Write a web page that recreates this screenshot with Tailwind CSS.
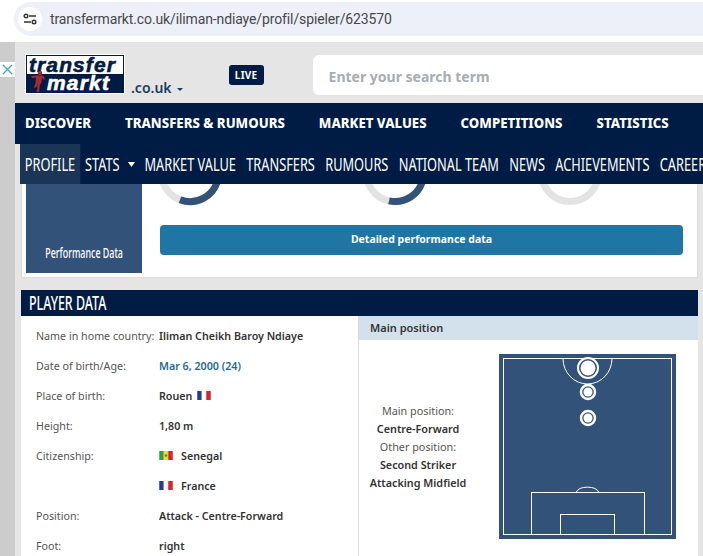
<!DOCTYPE html>
<html lang="en">
<head>
    <meta charset="UTF-8">
    <title>Iliman Ndiaye - Player profile | Transfermarkt</title>
    <script src="https://cdn.jsdelivr.net/npm/@tailwindcss/browser@4"></script>
</head>
<body class="h-[556px] overflow-hidden flex flex-col bg-white font-['Noto_Sans',sans-serif] text-[#333]">
    <!-- browser bar -->
    <div class="h-[42px] shrink-0 bg-white pt-[2px] pl-[14px]">
        <div class="h-[34px] bg-[#edf0f9] rounded-l-full flex items-center pl-[4px] gap-[8px]">
            <div class="w-[24px] h-[24px] rounded-full bg-white flex items-center justify-center">
                <svg width="14" height="12" viewBox="0 0 14 12" fill="none" stroke="#333" stroke-width="1.4">
                    <path d="M6 3h7M1 9h7"/><circle cx="3" cy="3" r="1.8"/><circle cx="11" cy="9" r="1.8"/>
                </svg>
            </div>
            <span class="text-[14px] text-[#474747] font-['Roboto',sans-serif] tracking-[-0.12px]">transfermarkt.co.uk/iliman-ndiaye/profil/spieler/623570</span>
        </div>
    </div>

    <div class="flex-1 flex min-h-0">
        <!-- ad strip -->
        <div class="w-[15px] shrink-0 bg-[#cccccc] pt-[20px]">
            <div class="h-[15px] bg-white flex items-center justify-center">
                <svg width="11" height="11" viewBox="0 0 11 11" stroke="#3ba7d8" stroke-width="1.3"><path d="M1 1l9 9M10 1l-9 9"/></svg>
            </div>
        </div>

        <div class="flex-1 min-w-0 bg-[#e5e5e5] flex flex-col">
            <!-- logo + search -->
            <div class="h-[61px] shrink-0 flex pt-[13px]">
                <div class="ml-[11px] w-[98px] h-[38px] bg-white border border-[#001b44] outline outline-white flex flex-col italic font-black font-['Liberation_Sans',sans-serif] relative">
                    <div class="h-[18px] bg-white text-[#001b44] text-[21px] leading-[18px] pl-[2px] tracking-[1.1px] [-webkit-text-stroke:0.6px_#001b44]">transfer</div>
                    <div class="h-[18px] bg-[#001b44] text-white text-[21px] leading-[18px] pl-[20px] tracking-[1.2px] [-webkit-text-stroke:0.6px_#ffffff]">markt</div>
                    <svg class="absolute left-[3px] top-[14px]" width="16" height="23" viewBox="0 0 16 22" fill="#a62a2f">
                        <circle cx="10" cy="2.500" r="2.200"/>
                        <path d="M1 5.500l6-.5h6l2 3-1 1-2-1.500-.5 4-1.500 3-1 6-2 0 .5-7-1 3-2 1-.5-1 1.500-4 .5-5.500-4 .5z"/>
                        <circle cx="8" cy="20" r="1.500"/>
                    </svg>
                </div>
                <div class="ml-[7px] mt-[23px] text-[14px] leading-[19px] font-semibold text-[#1d3a5f] flex items-center h-[19px]">.co.uk<span class="ml-[5px] mt-[3px] w-0 h-0 border-x-[3px] border-x-transparent border-t-[3px] border-t-[#1d3a5f]"></span></div>
                <div class="ml-[46px] mt-[10px] w-[35px] h-[20px] rounded-[3px] bg-[#001b44] text-white text-[10px] font-bold flex items-center justify-center tracking-[0.2px]">LIVE</div>
                <div class="ml-[49px] flex-1 h-[40px] bg-white rounded-l-[6px] flex items-center pl-[16px] pt-[2px] text-[14px] font-bold text-[#a8acb3]">Enter your search term</div>
            </div>

            <!-- main nav -->
            <div class="h-[41px] shrink-0 bg-[#001b44] flex items-center pl-[10px] gap-[34px] text-white text-[13.2px] font-extrabold whitespace-nowrap overflow-hidden">
                <span>DISCOVER</span>
                <span>TRANSFERS &amp; RUMOURS</span>
                <span>MARKET VALUES</span>
                <span>COMPETITIONS</span>
                <span>STATISTICS</span>
            </div>

            <!-- sub nav -->
            <div class="h-[40px] shrink-0 ml-[5px] bg-[#001b44] overflow-hidden">
                <div class="w-[1000px] h-full origin-left scale-x-[0.71] flex items-stretch text-white text-[18px] whitespace-nowrap">
                    <div class="w-[84.500px] bg-[#1a3556] flex items-center justify-center">PROFILE</div>
                    <div class="ml-[7px] flex items-center">STATS<span class="ml-[12px] w-0 h-0 border-x-[5.500px] border-x-transparent border-t-[5px] border-t-white"></span></div>
                    <div class="ml-[13px] flex items-center gap-[14.500px]">
                        <span>MARKET VALUE</span>
                        <span>TRANSFERS</span>
                        <span>RUMOURS</span>
                        <span>NATIONAL TEAM</span>
                        <span>NEWS</span>
                        <span>ACHIEVEMENTS</span>
                        <span>CAREER</span>
                    </div>
                </div>
            </div>

            <!-- performance card -->
            <div class="h-[94px] shrink-0 ml-[6px] mr-[5px] bg-white border-x border-b border-[#dcdcdc] flex pl-[4px]">
                <div class="w-[116px] h-[89px] bg-[#33527a] flex items-end justify-center pb-[10px] text-white">
                    <span class="scale-x-[0.635] text-[14px] font-medium whitespace-nowrap">Performance Data</span>
                </div>
                <div class="ml-[18px] w-[523px] flex flex-col">
                    <svg class="h-[41px] w-[523px]" viewBox="0 0 523 41" fill="none" stroke-width="7">
                        <circle cx="30" cy="-11" r="28.500" stroke="#e3e3e3"/>
                        <path d="M20 15.700A28.500 28.500 0 0 0 58 -5" stroke="#33527a"/>
                        <circle cx="235" cy="-11" r="28.500" stroke="#e3e3e3"/>
                        <path d="M229 16.860A28.500 28.500 0 0 0 263 -5" stroke="#33527a"/>
                        <circle cx="410" cy="-11" r="28.500" stroke="#e3e3e3"/>
                    </svg>
                    <div class="h-[30px] rounded-[4px] bg-[#1f76a5] text-white text-[10.5px] font-bold flex items-center justify-center">Detailed performance data</div>
                </div>
            </div>

            <!-- player data -->
            <div class="mt-[12px] flex-1 min-h-0 ml-[6px] mr-[5px] bg-white flex flex-col">
                <div class="h-[26px] shrink-0 bg-[#001b44] pl-[8px] flex items-center text-white">
                    <span class="origin-left scale-x-[0.655] text-[19px] font-medium whitespace-nowrap">PLAYER DATA</span>
                </div>
                <div class="flex-1 flex min-h-0">
                    <div class="w-[337px] shrink-0 pl-[15px] pt-[5px] text-[10.7px]">
                        <div class="grid grid-cols-[123px_1fr] auto-rows-[30px] items-center">
                            <span class="text-[#555]">Name in home country:</span><b class="font-semibold">Iliman Cheikh Baroy Ndiaye</b>
                            <span class="text-[#555]">Date of birth/Age:</span><b class="font-semibold text-[#1d6a96]">Mar 6, 2000 (24)</b>
                            <span class="text-[#555]">Place of birth:</span><b class="font-semibold flex items-center gap-[5px]">Rouen
                                <svg width="14" height="9" viewBox="0 0 3 2"><rect width="1" height="2" fill="#1f3c96"/><rect x="1" width="1" height="2" fill="#fff"/><rect x="2" width="1" height="2" fill="#d8232a"/></svg></b>
                            <span class="text-[#555]">Height:</span><b class="font-semibold">1,80 m</b>
                            <span class="text-[#555]">Citizenship:</span><b class="font-semibold flex items-center gap-[8px]">
                                <svg width="14" height="9" viewBox="0 0 3 2"><rect width="1" height="2" fill="#2f9e3e"/><rect x="1" width="1" height="2" fill="#f4d826"/><rect x="2" width="1" height="2" fill="#d8232a"/><circle cx="1.500" cy="1" r=".3" fill="#2f9e3e"/></svg>Senegal</b>
                            <span></span><b class="font-semibold flex items-center gap-[8px]">
                                <svg width="14" height="9" viewBox="0 0 3 2"><rect width="1" height="2" fill="#1f3c96"/><rect x="1" width="1" height="2" fill="#fff"/><rect x="2" width="1" height="2" fill="#d8232a"/></svg>France</b>
                            <span class="text-[#555]">Position:</span><b class="font-semibold">Attack - Centre-Forward</b>
                            <span class="text-[#555]">Foot:</span><b class="font-semibold">right</b>
                        </div>
                    </div>
                    <div class="flex-1 border-l border-[#dcdcdc] flex flex-col min-w-0">
                        <div class="h-[24px] shrink-0 bg-[#d3e1ec] pl-[11px] flex items-center text-[11px] font-semibold">Main position</div>
                        <div class="flex pt-[14px]">
                            <div class="w-[118px] pt-[48px] text-center text-[10.8px] leading-[18px]">
                                <div class="text-[#555]">Main position:</div>
                                <div class="font-semibold">Centre-Forward</div>
                                <div class="text-[#555]">Other position:</div>
                                <div class="font-semibold">Second Striker</div>
                                <div class="font-semibold">Attacking Midfield</div>
                            </div>
                            <svg class="ml-[22px] shrink-0" width="177" height="185" viewBox="0 0 177 185" fill="none" stroke="#fff">
                                <rect width="177" height="185" fill="#33527a" stroke="none"/>
                                <rect x="4.500" y="4.500" width="168" height="176"/>
                                <path d="M64 4.500a24.500 25.500 0 0 0 49 0"/>
                                <rect x="32.500" y="138.500" width="113" height="42"/>
                                <rect x="61.500" y="160.500" width="54" height="20"/>
                                <path d="M77 138.500a12 7.500 0 0 1 23 0"/>
                                <circle cx="89" cy="14" r="10" stroke-width="2"/><circle cx="89" cy="14" r="7.500" fill="#fff" stroke="none"/>
                                <circle cx="89" cy="38" r="7" stroke-width="2.500"/><circle cx="89" cy="38" r="4.500" fill="#fff" stroke="none"/>
                                <circle cx="89" cy="64" r="7" stroke-width="2.500"/><circle cx="89" cy="64" r="4.500" fill="#fff" stroke="none"/>
                            </svg>
                        </div>
                    </div>
                </div>
            </div>
        </div>
    </div>
</body>
</html>
